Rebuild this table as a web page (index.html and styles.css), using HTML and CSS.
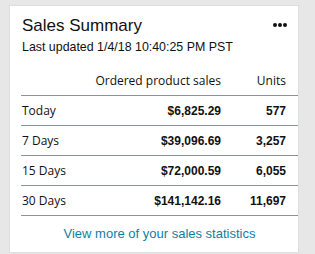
FILE: index.html
```html
<!DOCTYPE html>
<html>
<head>
<meta charset="utf-8">
<link rel="stylesheet" href="styles.css">
</head>
<body>
<div class="card">
  <div class="head">
    <h2 class="title">Sales Summary</h2>
    <svg class="more" width="14" height="4" viewBox="0 0 14 4"><circle cx="2" cy="2" r="2"/><circle cx="7" cy="2" r="2"/><circle cx="12" cy="2" r="2"/></svg>
  </div>
  <div class="sub">Last updated 1/4/18 10:40:25 PM PST</div>
  <table class="stats">
    <thead>
      <tr><th class="lbl"></th><th class="amt">Ordered product sales</th><th class="units">Units</th></tr>
    </thead>
    <tbody>
      <tr><td class="lbl">Today</td><td class="amt">$6,825.29</td><td class="units">577</td></tr>
      <tr><td class="lbl">7 Days</td><td class="amt">$39,096.69</td><td class="units">3,257</td></tr>
      <tr><td class="lbl">15 Days</td><td class="amt">$72,000.59</td><td class="units">6,055</td></tr>
      <tr><td class="lbl">30 Days</td><td class="amt">$141,142.16</td><td class="units">11,697</td></tr>
    </tbody>
  </table>
  <div class="foot"><a class="link" href="#">View more of your sales statistics</a></div>
</div>
</body>
</html>
```
FILE: styles.css
```css
html, body {
  margin: 0;
  padding: 0;
  background: #e7e7e7;
}
body {
  padding: 5px 0 0 9px;
  color: #111;
  font-family: "Liberation Sans", Arial, sans-serif;
}
.card {
  width: 277px;
  background: #fff;
  border: 1px solid #dedede;
  padding: 10px 0 10px 11px;
}
.head {
  display: flex;
  align-items: center;
  justify-content: space-between;
  padding-right: 11px;
}
.title {
  margin: 0 0 0 1px;
  font-size: 17px;
  line-height: 20px;
  font-weight: normal;
}
.more {
  fill: #111;
  margin-top: -2px;
}
.sub {
  margin: 3px 0 0 1px;
  font-size: 12.4px;
  line-height: 16px;
}
.stats {
  margin-top: 11px;
  width: 100%;
  border-collapse: collapse;
}
.stats th, .stats td {
  height: 29px;
  padding: 0;
  border-bottom: 1px solid #879596;
  vertical-align: middle;
}
.stats th {
  font-family: "Open Sans", sans-serif;
  font-weight: normal;
  font-size: 12px;
  line-height: 17px;
}
.stats td.lbl {
  font-family: "Open Sans", sans-serif;
  font-size: 12px;
  padding-left: 1px;
  text-align: left;
}
.stats td.amt, .stats td.units {
  font-weight: bold;
  font-size: 12px;
}
.amt {
  text-align: right;
}
.stats .units {
  width: 65px;
  padding-right: 12px;
  text-align: right;
}
.foot {
  margin-top: 10px;
  text-align: center;
  font-size: 13px;
  line-height: 16px;
}
.link {
  color: #0f7f9f;
  text-decoration: none;
}
```
